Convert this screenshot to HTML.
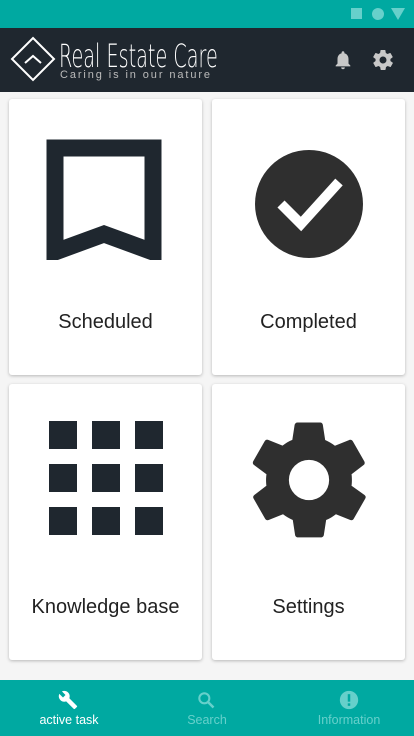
<!DOCTYPE html>
<html><head><meta charset="utf-8"><style>
*{margin:0;padding:0;box-sizing:border-box}
body{width:414px;height:736px;background:#f5f5f5;font-family:"Liberation Sans",sans-serif;position:relative;overflow:hidden}
.sb{position:absolute;top:0;left:0;width:414px;height:28px;background:#00a9a1}
.hd{position:absolute;top:28px;left:0;width:414px;height:64px;background:#1f272f}
.card{position:absolute;width:193px;height:276px;background:#fff;border-radius:3px;box-shadow:0 1px 3px rgba(0,0,0,.25)}
.card .t{position:absolute;left:0;width:100%;text-align:center;top:212px;font-size:20px;color:#222}
.nav{position:absolute;top:680px;left:0;width:414px;height:56px;background:#00a9a1}
.ni{position:absolute;top:33px;font-size:12.5px;text-align:center;width:120px}
</style></head><body>
<div class="sb">
<div style="position:absolute;left:351px;top:8px;width:11px;height:11px;background:#66d0cb"></div>
<div style="position:absolute;left:372px;top:8px;width:12px;height:12px;border-radius:50%;background:#66d0cb"></div>
<svg style="position:absolute;left:391px;top:8px" width="14" height="12"><path d="M0 0H14L7 12Z" fill="#66d0cb"/></svg>
</div>
<div class="hd">
<svg style="position:absolute;left:10px;top:8px" width="46" height="46"><path d="M23 2L44 23L23 44L2 23Z" fill="none" stroke="#fff" stroke-width="2"/><path d="M15 27L23 20L31 27" fill="none" stroke="#fff" stroke-width="2"/></svg>
<div style="position:absolute;left:59px;top:9px;color:#fff;font-size:32px;font-family:'DejaVu Sans','Liberation Sans',sans-serif;transform:scaleX(.6);transform-origin:left;letter-spacing:0px;font-weight:200;-webkit-text-stroke:0">Real Estate Care</div>
<div style="position:absolute;left:60px;top:41px;color:#bbb;font-size:11px;letter-spacing:1.9px">Caring is in our nature</div>
<svg style="position:absolute;left:332px;top:20px" width="22" height="24" viewBox="0 0 24 24"><path d="M12 22a2 2 0 0 0 2-2h-4a2 2 0 0 0 2 2zm6-6v-5c0-3.1-1.6-5.6-4.5-6.3V4a1.5 1.5 0 0 0-3 0v.7C7.6 5.4 6 7.9 6 11v5l-2 2v1h16v-1z" fill="#c8c8c8"/></svg>
<svg style="position:absolute;left:371px;top:20px" width="24" height="24" viewBox="0 0 24 24"><path d="M19.4 13c.04-.3.06-.6.06-1s-.02-.7-.06-1l2.1-1.6c.2-.15.24-.42.12-.64l-2-3.5c-.12-.22-.39-.3-.61-.22l-2.5 1c-.5-.4-1.1-.7-1.700-1l-.4-2.6A.5.5 0 0 0 14 2h-4c-.25 0-.46.18-.5.42l-.4 2.6c-.6.25-1.2.6-1.7 1l-2.5-1a.5.5 0 0 0-.6.22l-2 3.5c-.13.22-.07.49.12.64L4.6 11c-.04.3-.07.7-.07 1s.02.7.06 1l-2.1 1.6a.5.5 0 0 0-.12.64l2 3.5c.12.22.39.3.61.22l2.5-1c.5.4 1.1.7 1.7 1l.4 2.6c.04.24.25.42.5.42h4c.25 0 .46-.18.5-.42l.4-2.6c.6-.25 1.2-.6 1.7-1l2.5 1c.23.09.5 0 .6-.22l2-3.5a.5.5 0 0 0-.12-.64zM12 15.5a3.5 3.5 0 1 1 0-7 3.5 3.5 0 0 1 0 7z" fill="#c8c8c8"/></svg>
</div>

<div class="card" style="left:9px;top:99px">
<svg style="position:absolute;left:36px;top:39px" width="118" height="122"><path d="M10 10H108V114L59 96L10 114Z" fill="none" stroke="#1f272f" stroke-width="17" stroke-linejoin="miter"/></svg>
<div class="t">Scheduled</div></div>
<div class="card" style="left:212px;top:99px">
<svg style="position:absolute;left:42px;top:50px" width="110" height="110"><circle cx="55" cy="55" r="54" fill="#2f2f2f"/><path d="M27 55L47 75L85 33" fill="none" stroke="#fff" stroke-width="10"/></svg>
<div class="t">Completed</div></div>
<div class="card" style="left:9px;top:384px">
<svg style="position:absolute;left:40px;top:37px" width="116" height="116"><g fill="#1f272f">
<rect x="0" y="0" width="28" height="28"/><rect x="43" y="0" width="28" height="28"/><rect x="86" y="0" width="28" height="28"/>
<rect x="0" y="43" width="28" height="28"/><rect x="43" y="43" width="28" height="28"/><rect x="86" y="43" width="28" height="28"/>
<rect x="0" y="86" width="28" height="28"/><rect x="43" y="86" width="28" height="28"/><rect x="86" y="86" width="28" height="28"/></g></svg>
<div class="t">Knowledge base</div></div>
<div class="card" style="left:212px;top:384px">
<svg style="position:absolute;left:28px;top:27px" width="138" height="138" viewBox="0 0 24 24"><path d="M19.4 13c.04-.3.06-.6.06-1s-.02-.7-.06-1l2.1-1.6c.2-.15.24-.42.12-.64l-2-3.5c-.12-.22-.39-.3-.61-.22l-2.5 1c-.5-.4-1.1-.7-1.7-1l-.4-2.6A.5.5 0 0 0 14 2h-4c-.25 0-.46.18-.5.42l-.4 2.6c-.6.25-1.2.6-1.7 1l-2.5-1a.5.5 0 0 0-.6.22l-2 3.5c-.13.22-.07.49.12.64L4.6 11c-.04.3-.07.7-.07 1s.02.7.06 1l-2.1 1.6a.5.5 0 0 0-.12.64l2 3.5c.12.22.39.3.61.22l2.5-1c.5.4 1.1.7 1.7 1l.4 2.6c.04.24.25.42.5.42h4c.25 0 .46-.18.5-.42l.4-2.6c.6-.25 1.2-.6 1.7-1l2.5 1c.23.09.5 0 .6-.22l2-3.5a.5.5 0 0 0-.12-.64zM12 15.5a3.5 3.5 0 1 1 0-7 3.5 3.5 0 0 1 0 7z" fill="#2f2f2f"/></svg>
<div class="t">Settings</div></div>

<div class="nav">
<svg style="position:absolute;left:58px;top:10px" width="20" height="20" viewBox="0 0 24 24"><path d="M22.7 19l-9.1-9.1c.9-2.3.4-5-1.5-6.9-2-2-5-2.4-7.4-1.3L9 6 6 9 1.6 4.7C.4 7.1.9 10.1 2.9 12.1c1.9 1.9 4.6 2.4 6.9 1.5l9.1 9.1c.4.4 1 .4 1.4 0l2.3-2.300c.5-.4.5-1.1.1-1.4z" fill="#fff"/></svg>
<div class="ni" style="left:9px;color:#fff">active task</div>
<svg style="position:absolute;left:196px;top:10px" width="20" height="20" viewBox="0 0 24 24"><circle cx="10" cy="10" r="6" fill="none" stroke="#66d0cb" stroke-width="2.5"/><path d="M14.5 14.5L21 21" stroke="#66d0cb" stroke-width="3"/></svg>
<div class="ni" style="left:147px;color:#66d0cb">Search</div>
<svg style="position:absolute;left:339px;top:10px" width="20" height="20" viewBox="0 0 24 24"><circle cx="12" cy="12" r="11" fill="#66d0cb"/><rect x="10.5" y="5" width="3" height="9" fill="#00a9a1"/><rect x="10.5" y="16" width="3" height="3" fill="#00a9a1"/></svg>
<div class="ni" style="left:289px;color:#66d0cb">Information</div>
</div>
</body></html>
